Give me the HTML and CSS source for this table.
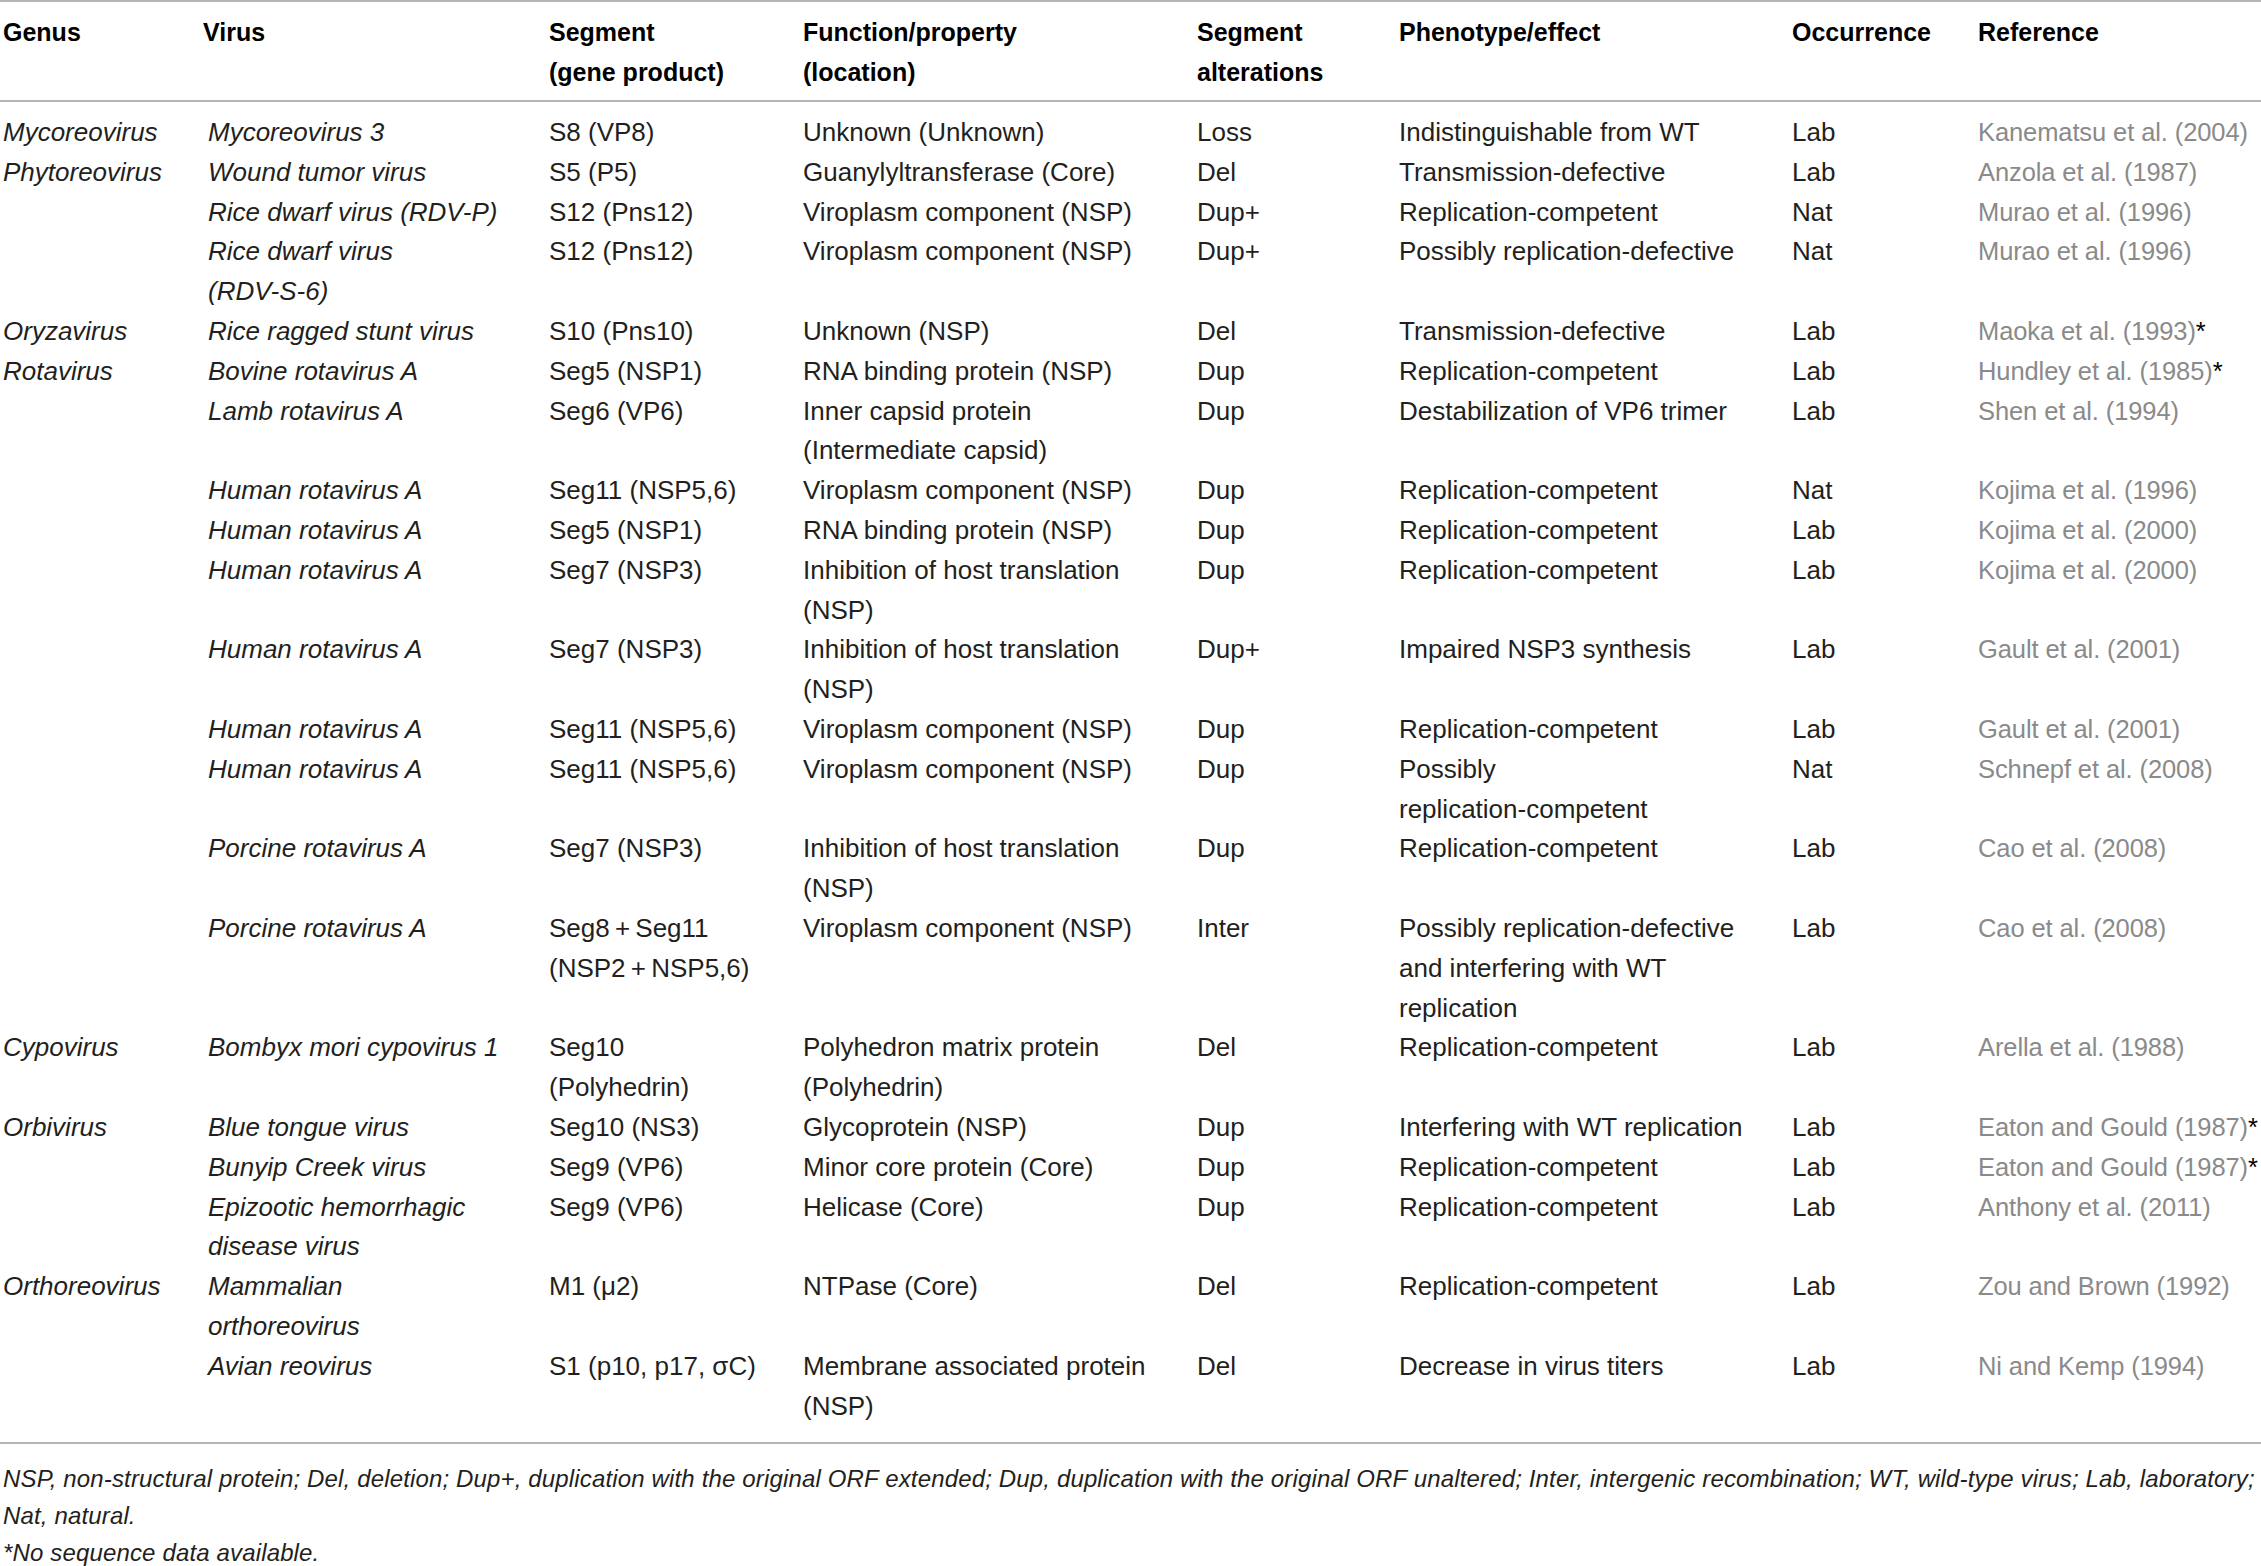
FILE: index.html
```html
<!DOCTYPE html>
<html lang="en">
<head>
    <meta charset="UTF-8">
    <title>Segment alterations in reoviruses</title>
    <link rel="stylesheet" href="styles.css">
</head>
<body>
    <table class="data-table">
        <colgroup>
            <col class="col-genus">
            <col class="col-virus">
            <col class="col-segment">
            <col class="col-function">
            <col class="col-alter">
            <col class="col-phenotype">
            <col class="col-occurrence">
            <col class="col-reference">
        </colgroup>
        <thead>
            <tr>
                <th>Genus</th>
                <th>Virus</th>
                <th>Segment<br>(gene product)</th>
                <th>Function/property<br>(location)</th>
                <th>Segment<br>alterations</th>
                <th>Phenotype/effect</th>
                <th>Occurrence</th>
                <th>Reference</th>
            </tr>
        </thead>
        <tbody>
            <tr>
                <td class="genus">Mycoreovirus</td>
                <td class="virus">Mycoreovirus 3</td>
                <td>S8 (VP8)</td>
                <td>Unknown (Unknown)</td>
                <td>Loss</td>
                <td>Indistinguishable from WT</td>
                <td>Lab</td>
                <td class="ref">Kanematsu et al. (2004)</td>
            </tr>
            <tr>
                <td class="genus">Phytoreovirus</td>
                <td class="virus">Wound tumor virus</td>
                <td>S5 (P5)</td>
                <td>Guanylyltransferase (Core)</td>
                <td>Del</td>
                <td>Transmission-defective</td>
                <td>Lab</td>
                <td class="ref">Anzola et al. (1987)</td>
            </tr>
            <tr>
                <td class="genus"></td>
                <td class="virus">Rice dwarf virus (RDV-P)</td>
                <td>S12 (Pns12)</td>
                <td>Viroplasm component (NSP)</td>
                <td>Dup+</td>
                <td>Replication-competent</td>
                <td>Nat</td>
                <td class="ref">Murao et al. (1996)</td>
            </tr>
            <tr>
                <td class="genus"></td>
                <td class="virus">Rice dwarf virus<br>(RDV-S-6)</td>
                <td>S12 (Pns12)</td>
                <td>Viroplasm component (NSP)</td>
                <td>Dup+</td>
                <td>Possibly replication-defective</td>
                <td>Nat</td>
                <td class="ref">Murao et al. (1996)</td>
            </tr>
            <tr>
                <td class="genus">Oryzavirus</td>
                <td class="virus">Rice ragged stunt virus</td>
                <td>S10 (Pns10)</td>
                <td>Unknown (NSP)</td>
                <td>Del</td>
                <td>Transmission-defective</td>
                <td>Lab</td>
                <td class="ref">Maoka et al. (1993)<span class="mark">*</span></td>
            </tr>
            <tr>
                <td class="genus">Rotavirus</td>
                <td class="virus">Bovine rotavirus A</td>
                <td>Seg5 (NSP1)</td>
                <td>RNA binding protein (NSP)</td>
                <td>Dup</td>
                <td>Replication-competent</td>
                <td>Lab</td>
                <td class="ref">Hundley et al. (1985)<span class="mark">*</span></td>
            </tr>
            <tr>
                <td class="genus"></td>
                <td class="virus">Lamb rotavirus A</td>
                <td>Seg6 (VP6)</td>
                <td>Inner capsid protein<br>(Intermediate capsid)</td>
                <td>Dup</td>
                <td>Destabilization of VP6 trimer</td>
                <td>Lab</td>
                <td class="ref">Shen et al. (1994)</td>
            </tr>
            <tr>
                <td class="genus"></td>
                <td class="virus">Human rotavirus A</td>
                <td>Seg11 (NSP5,6)</td>
                <td>Viroplasm component (NSP)</td>
                <td>Dup</td>
                <td>Replication-competent</td>
                <td>Nat</td>
                <td class="ref">Kojima et al. (1996)</td>
            </tr>
            <tr>
                <td class="genus"></td>
                <td class="virus">Human rotavirus A</td>
                <td>Seg5 (NSP1)</td>
                <td>RNA binding protein (NSP)</td>
                <td>Dup</td>
                <td>Replication-competent</td>
                <td>Lab</td>
                <td class="ref">Kojima et al. (2000)</td>
            </tr>
            <tr>
                <td class="genus"></td>
                <td class="virus">Human rotavirus A</td>
                <td>Seg7 (NSP3)</td>
                <td>Inhibition of host translation<br>(NSP)</td>
                <td>Dup</td>
                <td>Replication-competent</td>
                <td>Lab</td>
                <td class="ref">Kojima et al. (2000)</td>
            </tr>
            <tr>
                <td class="genus"></td>
                <td class="virus">Human rotavirus A</td>
                <td>Seg7 (NSP3)</td>
                <td>Inhibition of host translation<br>(NSP)</td>
                <td>Dup+</td>
                <td>Impaired NSP3 synthesis</td>
                <td>Lab</td>
                <td class="ref">Gault et al. (2001)</td>
            </tr>
            <tr>
                <td class="genus"></td>
                <td class="virus">Human rotavirus A</td>
                <td>Seg11 (NSP5,6)</td>
                <td>Viroplasm component (NSP)</td>
                <td>Dup</td>
                <td>Replication-competent</td>
                <td>Lab</td>
                <td class="ref">Gault et al. (2001)</td>
            </tr>
            <tr>
                <td class="genus"></td>
                <td class="virus">Human rotavirus A</td>
                <td>Seg11 (NSP5,6)</td>
                <td>Viroplasm component (NSP)</td>
                <td>Dup</td>
                <td>Possibly<br>replication-competent</td>
                <td>Nat</td>
                <td class="ref">Schnepf et al. (2008)</td>
            </tr>
            <tr>
                <td class="genus"></td>
                <td class="virus">Porcine rotavirus A</td>
                <td>Seg7 (NSP3)</td>
                <td>Inhibition of host translation<br>(NSP)</td>
                <td>Dup</td>
                <td>Replication-competent</td>
                <td>Lab</td>
                <td class="ref">Cao et al. (2008)</td>
            </tr>
            <tr>
                <td class="genus"></td>
                <td class="virus">Porcine rotavirus A</td>
                <td>Seg8&#8201;+&#8201;Seg11<br>(NSP2&#8201;+&#8201;NSP5,6)</td>
                <td>Viroplasm component (NSP)</td>
                <td>Inter</td>
                <td>Possibly replication-defective<br>and interfering with WT<br>replication</td>
                <td>Lab</td>
                <td class="ref">Cao et al. (2008)</td>
            </tr>
            <tr>
                <td class="genus">Cypovirus</td>
                <td class="virus">Bombyx mori cypovirus 1</td>
                <td>Seg10<br>(Polyhedrin)</td>
                <td>Polyhedron matrix protein<br>(Polyhedrin)</td>
                <td>Del</td>
                <td>Replication-competent</td>
                <td>Lab</td>
                <td class="ref">Arella et al. (1988)</td>
            </tr>
            <tr>
                <td class="genus">Orbivirus</td>
                <td class="virus">Blue tongue virus</td>
                <td>Seg10 (NS3)</td>
                <td>Glycoprotein (NSP)</td>
                <td>Dup</td>
                <td>Interfering with WT replication</td>
                <td>Lab</td>
                <td class="ref">Eaton and Gould (1987)<span class="mark">*</span></td>
            </tr>
            <tr>
                <td class="genus"></td>
                <td class="virus">Bunyip Creek virus</td>
                <td>Seg9 (VP6)</td>
                <td>Minor core protein (Core)</td>
                <td>Dup</td>
                <td>Replication-competent</td>
                <td>Lab</td>
                <td class="ref">Eaton and Gould (1987)<span class="mark">*</span></td>
            </tr>
            <tr>
                <td class="genus"></td>
                <td class="virus">Epizootic hemorrhagic<br>disease virus</td>
                <td>Seg9 (VP6)</td>
                <td>Helicase (Core)</td>
                <td>Dup</td>
                <td>Replication-competent</td>
                <td>Lab</td>
                <td class="ref">Anthony et al. (2011)</td>
            </tr>
            <tr>
                <td class="genus">Orthoreovirus</td>
                <td class="virus">Mammalian<br>orthoreovirus</td>
                <td>M1 (&mu;2)</td>
                <td>NTPase (Core)</td>
                <td>Del</td>
                <td>Replication-competent</td>
                <td>Lab</td>
                <td class="ref">Zou and Brown (1992)</td>
            </tr>
            <tr>
                <td class="genus"></td>
                <td class="virus">Avian reovirus</td>
                <td>S1 (p10, p17, &sigma;C)</td>
                <td>Membrane associated protein<br>(NSP)</td>
                <td>Del</td>
                <td>Decrease in virus titers</td>
                <td>Lab</td>
                <td class="ref">Ni and Kemp (1994)</td>
            </tr>
        </tbody>
    </table>
    <div class="notes">
        <p>NSP, non-structural protein; Del, deletion; Dup+, duplication with the original ORF extended; Dup, duplication with the original ORF unaltered; Inter, intergenic recombination; WT, wild-type virus; Lab, laboratory;</p>
        <p>Nat, natural.</p>
        <p>*No sequence data available.</p>
    </div>
</body>
</html>
```

FILE: styles.css
```css
body {
    margin: 0;
    background: #fff;
    color: #231f20;
    font-family: "Liberation Sans", Arial, sans-serif;
}
.data-table {
    width: 2261px;
    border-collapse: collapse;
    table-layout: fixed;
    border-top: 2px solid #b5b5b5;
    border-bottom: 2px solid #b5b5b5;
}
.col-genus { width: 200px; }
.col-virus { width: 346px; }
.col-segment { width: 254px; }
.col-function { width: 394px; }
.col-alter { width: 202px; }
.col-phenotype { width: 393px; }
.col-occurrence { width: 186px; }
.col-reference { width: 286px; }
th, td {
    padding: 0 0 0 3px;
    text-align: left;
    vertical-align: top;
    white-space: nowrap;
}
thead th {
    font-size: 25px;
    font-weight: bold;
    line-height: 40px;
    color: #000;
    padding-top: 10px;
    padding-bottom: 8px;
    border-bottom: 2px solid #b5b5b5;
}
tbody td {
    font-size: 26px;
    line-height: 39.8px;
}
tbody tr:first-child td {
    padding-top: 11px;
}
tbody tr:last-child td {
    padding-bottom: 16px;
}
.genus, .virus {
    font-style: italic;
}
.virus {
    padding-left: 8px;
}
.ref {
    color: #8a8a8a;
    font-size: 25.5px;
    letter-spacing: -0.1px;
}
.ref .mark {
    color: #000;
    letter-spacing: 0;
}
.notes {
    padding-top: 16px;
}
.notes p {
    margin: 0 0 0 3px;
    font-size: 24px;
    letter-spacing: 0.15px;
    font-style: italic;
    line-height: 37px;
    white-space: nowrap;
}
```
